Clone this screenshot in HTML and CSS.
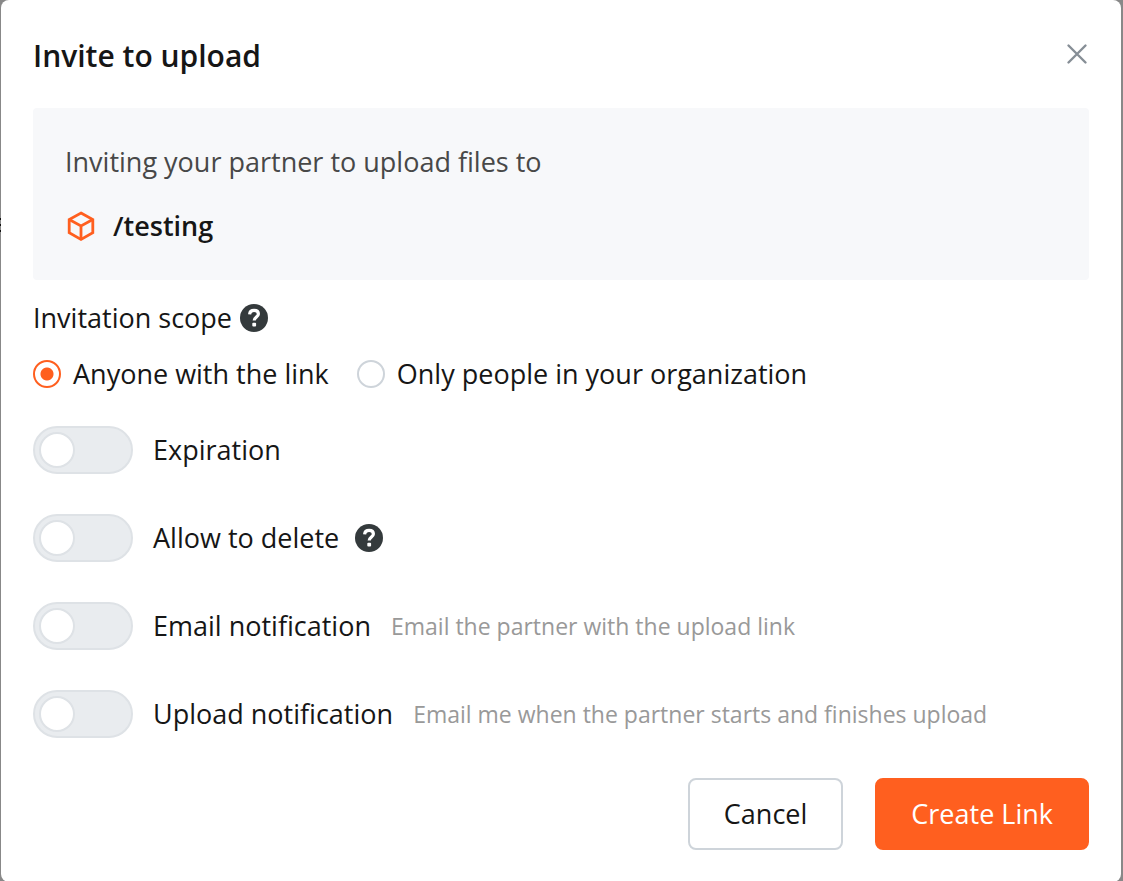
FILE: index.html
```html
<!DOCTYPE html>
<html lang="en">
<head>
    <meta charset="UTF-8">
    <meta name="viewport" content="width=device-width, initial-scale=1.0">
    <title>Invite to upload</title>
    <link rel="stylesheet" href="styles.css">
</head>
<body>
    <div class="modal" role="dialog" aria-labelledby="modal-title">
        <header class="modal-header">
            <h2 id="modal-title">Invite to upload</h2>
            <button type="button" class="close-button" aria-label="Close">
                <svg width="24" height="24" viewBox="0 0 24 24" fill="none" stroke="#868e96" stroke-width="2.4" stroke-linecap="round">
                    <path d="M3.5 3.5l17 17M20.5 3.5l-17 17"/>
                </svg>
            </button>
        </header>

        <form class="invite-form">
            <div class="destination">
                <p class="destination-text">Inviting your partner to upload files to</p>
                <div class="destination-path">
                    <svg width="32" height="32" viewBox="0 0 32 32" fill="none" stroke="#ff5f1f" stroke-width="2.8">
                        <path d="M16 3l11.800 6.600v13.200L16 29.400 4.200 22.800V9.600z"/>
                        <path d="M4.200 9.600L16 16l11.800-6.400M16 16v13.400"/>
                    </svg>
                    <strong>/testing</strong>
                </div>
            </div>

            <fieldset class="scope">
                <legend class="scope-title">
                    <span>Invitation scope</span>
                    <svg class="help-icon" viewBox="0 0 28 28">
                        <circle cx="14" cy="14" r="14" fill="#343a3c"/>
                        <path d="M9.600 10.400C9.800 7.700 11.500 6.400 14.100 6.400c2.600 0 4.300 1.400 4.300 3.600 0 3-4.200 3.100-4.200 6.600" fill="none" stroke="#fff" stroke-width="3.200"/>
                        <rect x="12.300" y="18.800" width="3.800" height="3.800" rx="1" fill="#fff"/>
                    </svg>
                </legend>
                <div class="radio-group">
                    <label class="radio-label">
                        <input type="radio" name="scope" value="anyone" class="radio" checked>
                        <span>Anyone with the link</span>
                    </label>
                    <label class="radio-label">
                        <input type="radio" name="scope" value="organization" class="radio">
                        <span>Only people in your organization</span>
                    </label>
                </div>
            </fieldset>

            <div class="options">
                <div class="option">
                    <input type="checkbox" id="expiration" class="toggle">
                    <label for="expiration">Expiration</label>
                </div>
                <div class="option">
                    <input type="checkbox" id="allow-delete" class="toggle">
                    <label for="allow-delete">Allow to delete</label>
                    <svg class="help-icon" viewBox="0 0 28 28">
                        <circle cx="14" cy="14" r="14" fill="#343a3c"/>
                        <path d="M9.600 10.400C9.800 7.700 11.500 6.400 14.100 6.400c2.600 0 4.300 1.400 4.300 3.600 0 3-4.200 3.100-4.200 6.600" fill="none" stroke="#fff" stroke-width="3.200"/>
                        <rect x="12.300" y="18.800" width="3.800" height="3.800" rx="1" fill="#fff"/>
                    </svg>
                </div>
                <div class="option">
                    <input type="checkbox" id="email-notification" class="toggle">
                    <label for="email-notification">Email notification</label>
                    <span class="hint">Email the partner with the upload link</span>
                </div>
                <div class="option">
                    <input type="checkbox" id="upload-notification" class="toggle">
                    <label for="upload-notification">Upload notification</label>
                    <span class="hint">Email me when the partner starts and finishes upload</span>
                </div>
            </div>

            <div class="actions">
                <button type="button" class="button">Cancel</button>
                <button type="submit" class="button button-primary">Create Link</button>
            </div>
        </form>
    </div>
</body>
</html>
```
FILE: styles.css
```css
:root {
    --primary-color: #ff5f1f;
    --text-color: #161616;
    --muted-color: #999;
    --border-color: #ced4da;
}

*,
*::before {
    box-sizing: border-box;
}

body {
    margin: 0;
    padding: 0 2px 0 1px;
    background-color: #888;
    color: var(--text-color);
    font-family: 'Segoe UI', 'Open Sans', 'Noto Sans', sans-serif;
    font-size: 27px;
    line-height: 36px;
}

/* edge of the dimmed page behind the dialog */
body::before {
    content: "";
    position: absolute;
    top: 218px;
    left: 0;
    width: 1px;
    height: 14px;
    background: repeating-linear-gradient(#111 0 2px, #888 2px 6px);
}

.modal {
    min-height: 100vh;
    padding: 32px;
    background-color: #fff;
    border-radius: 8px;
}

.modal-header {
    display: flex;
    justify-content: space-between;
    align-items: center;
    height: 48px;
    margin-bottom: 28px;
}

h2 {
    margin: 0;
    font-size: 30px;
    font-weight: 600;
}

.close-button {
    display: flex;
    padding: 0 0 4px;
    border: none;
    background: none;
    cursor: pointer;
}

.destination {
    display: flex;
    flex-direction: column;
    gap: 20px;
    padding: 32px;
    background-color: #f7f8fa;
    border-radius: 4px;
    line-height: 44px;
}

.destination-text {
    margin: 0;
    color: #484848;
}

.destination-path {
    display: flex;
    align-items: center;
    gap: 16px;
}

.destination-path strong {
    font-weight: 600;
}

.scope {
    margin: 0;
    padding: 0;
    border: none;
}

.scope-title {
    display: flex;
    align-items: center;
    gap: 8px;
    padding: 20px 0;
}

.help-icon {
    flex: none;
    width: 28px;
    height: 28px;
}

.radio-group {
    display: flex;
    gap: 28px;
}

.radio-label {
    display: flex;
    align-items: center;
    gap: 12px;
}

.radio {
    appearance: none;
    width: 28px;
    height: 28px;
    margin: 0;
    border: 2px solid var(--border-color);
    border-radius: 50%;
}

.radio:checked {
    border-color: var(--primary-color);
    background: radial-gradient(circle, var(--primary-color) 6px, #fff 7px);
}

.options {
    display: flex;
    flex-direction: column;
    gap: 40px;
    margin: 34px 0 40px;
}

.option {
    display: flex;
    align-items: center;
}

.option .help-icon {
    margin-left: 16px;
}

.toggle {
    appearance: none;
    display: flex;
    align-items: center;
    flex: none;
    width: 100px;
    height: 48px;
    margin: 0 20px 0 0;
    padding: 0 4px;
    border: 2px solid #dee2e6;
    border-radius: 24px;
    background-color: #e9ecef;
}

.toggle::before {
    content: "";
    width: 36px;
    height: 36px;
    border: 2px solid #dee2e6;
    border-radius: 50%;
    background-color: #fff;
}

.toggle:checked {
    justify-content: flex-end;
    border-color: var(--primary-color);
    background-color: var(--primary-color);
}

.hint {
    margin-left: 20px;
    color: var(--muted-color);
    font-size: 23px;
}

.actions {
    display: flex;
    justify-content: flex-end;
    gap: 32px;
}

.button {
    height: 72px;
    padding: 0 34px;
    border: 2px solid var(--border-color);
    border-radius: 8px;
    background-color: #fff;
    color: var(--text-color);
    font: inherit;
    cursor: pointer;
}

.button-primary {
    border-color: var(--primary-color);
    background-color: var(--primary-color);
    color: #fff;
}
```
